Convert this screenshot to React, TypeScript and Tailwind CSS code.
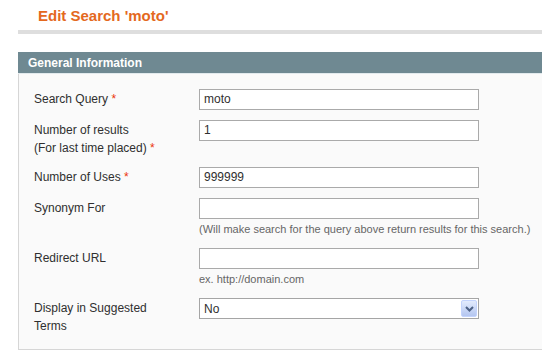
import type { ReactNode } from "react";

const font = { fontFamily: '"Liberation Sans", Arial, sans-serif' };

function Req() {
  return <span className="text-[#eb340a]"> *</span>;
}

function Row({ label, children }: { label: ReactNode; children: ReactNode }) {
  return (
    <div className="flex mb-[10px]">
      <div className="w-[165px] pt-[1px] leading-[18px] text-[12px] text-[#2f2f2f]">{label}</div>
      <div className="w-[280px]">{children}</div>
    </div>
  );
}

function TextInput({ value = "" }: { value?: string }) {
  return (
    <div className="h-[21px] w-[280px] border border-[#aaaaaa] bg-white px-[4px] text-[12px] leading-[19px] text-[#2f2f2f]">
      {value}
    </div>
  );
}

function Note({ children }: { children: ReactNode }) {
  return <div className="mt-[1px] whitespace-nowrap text-[11px] leading-[18px] text-[#666666]">{children}</div>;
}

function SelectBox({ value }: { value: string }) {
  return (
    <div className="flex h-[21px] w-[280px] items-center border border-[#a5a5a5] bg-white pl-[4px] pr-[1px] text-[12px] text-[#2f2f2f]">
      <span className="flex-1">{value}</span>
      <span className="flex h-[17px] w-[16px] items-center justify-center rounded-[2px] border border-[#c3d3fd] bg-gradient-to-b from-[#e3ebfd] to-[#b4c6f0]">
        <svg width="9" height="6" viewBox="0 0 9 6">
          <path d="M1 1 L4.5 4.5 L8 1" fill="none" stroke="#4d6185" strokeWidth="2" />
        </svg>
      </span>
    </div>
  );
}

export default function App() {
  return (
    <div className="h-[359px] w-[542px] overflow-hidden bg-white" style={font}>
      <div className="ml-[18px] w-[560px]">
        <h3 className="pl-[20px] pt-[7px] text-[15px] font-bold leading-[18px] text-[#e4691e]">Edit Search 'moto'</h3>
        <div className="mt-[5px] h-[4px] bg-[#dedede]" />
        <div className="mt-[18px]">
          <div className="h-[22px] border-b border-[#e2eaed] bg-[#6f8992] pl-[10px] text-[12px] font-bold leading-[22px] text-white">
            General Information
          </div>
          <div className="border-b border-l border-[#d6d6d6] bg-[#fafafa] pb-[4px] pl-[15px] pt-[15px]">
            <Row label={<>Search Query<Req /></>}>
              <TextInput value="moto" />
            </Row>
            <Row
              label={
                <>
                  Number of results
                  <br />
                  (For last time placed)<Req />
                </>
              }
            >
              <TextInput value="1" />
            </Row>
            <Row label={<>Number of Uses<Req /></>}>
              <TextInput value="999999" />
            </Row>
            <Row label="Synonym For">
              <TextInput />
              <Note>(Will make search for the query above return results for this search.)</Note>
            </Row>
            <Row label="Redirect URL">
              <TextInput />
              <Note>ex. http://domain.com</Note>
            </Row>
            <Row
              label={
                <>
                  Display in Suggested
                  <br />
                  Terms
                </>
              }
            >
              <SelectBox value="No" />
            </Row>
          </div>
        </div>
      </div>
    </div>
  );
}
